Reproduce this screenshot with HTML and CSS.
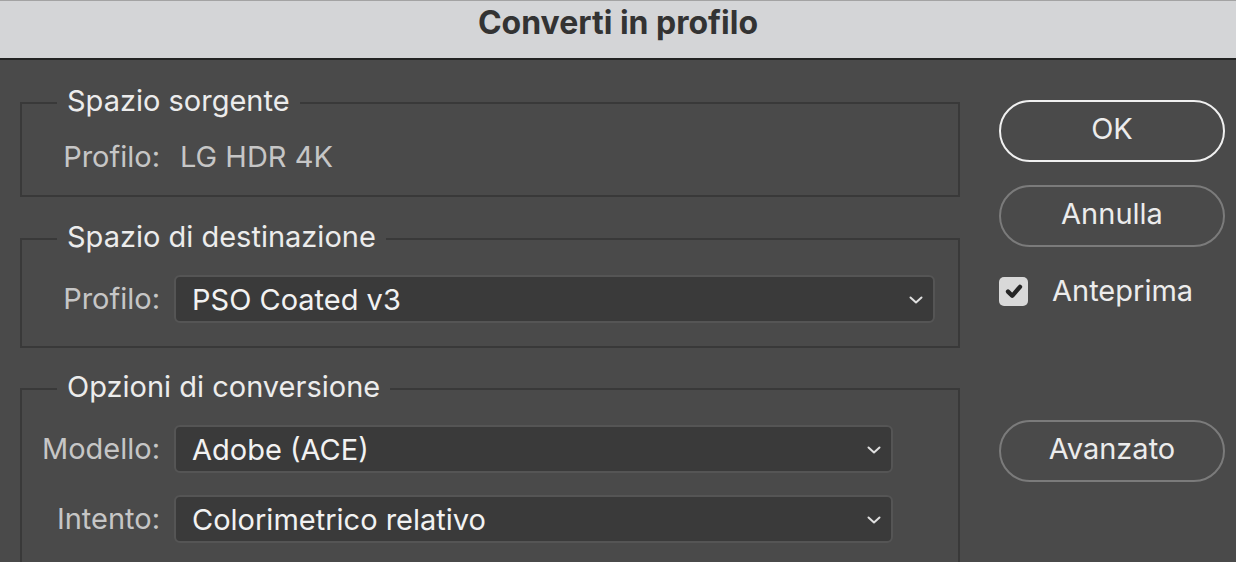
FILE: index.html
```html
<!DOCTYPE html>
<html lang="it">
<head>
  <meta charset="UTF-8" />
  <meta name="viewport" content="width=device-width, initial-scale=1.0"/>
  <title>Converti in profilo</title>
  <link rel="stylesheet" href="styles.css">
</head>
<body>
  <div class="titlebar">Converti in profilo</div>

  <div class="dialog">
    <div class="panels">
      <fieldset class="group group-source">
        <legend>Spazio sorgente</legend>
        <div class="row">
          <span class="label">Profilo:</span>
          <span class="value">LG HDR 4K</span>
        </div>
      </fieldset>

      <fieldset class="group group-dest">
        <legend>Spazio di destinazione</legend>
        <div class="row">
          <span class="label">Profilo:</span>
          <div class="select select-wide">
            <span>PSO Coated v3</span>
            <svg class="chevron" viewBox="0 0 14 8"><path d="M1.5 1.5 L7 6.5 L12.5 1.5"/></svg>
          </div>
        </div>
      </fieldset>

      <fieldset class="group group-options">
        <legend>Opzioni di conversione</legend>
        <div class="row">
          <span class="label">Modello:</span>
          <div class="select">
            <span>Adobe (ACE)</span>
            <svg class="chevron" viewBox="0 0 14 8"><path d="M1.5 1.5 L7 6.5 L12.5 1.5"/></svg>
          </div>
        </div>
        <div class="row">
          <span class="label">Intento:</span>
          <div class="select">
            <span>Colorimetrico relativo</span>
            <svg class="chevron" viewBox="0 0 14 8"><path d="M1.5 1.5 L7 6.5 L12.5 1.5"/></svg>
          </div>
        </div>
      </fieldset>
    </div>

    <div class="actions">
      <button class="btn btn-default">OK</button>
      <button class="btn">Annulla</button>
      <label class="check">
        <span class="box">
          <svg viewBox="0 0 20 20"><path d="M5 10.5 L8.5 14 L15 6.5"/></svg>
        </span>
        <span>Anteprima</span>
      </label>
      <button class="btn btn-advanced">Avanzato</button>
    </div>
  </div>
</body>
</html>
```

FILE: styles.css
```css
/* Page and title bar */
body {
  margin: 0;
  height: 100vh;
  overflow: hidden;
  background: #4a4a4a;
  font-family: Inter, "Noto Sans", sans-serif;
  font-size: 29px;
  color: #e6e6e6;
}

.titlebar {
  height: 57px;
  line-height: 44px;
  background: #d4d5d7;
  border-top: 1px solid #a3a3a3;
  border-bottom: 2px solid #232323;
  text-align: center;
  font-size: 32px;
  font-weight: bold;
  color: #333;
}

/* Dialog body */
.dialog {
  display: flex;
  padding: 0 11px 0 20px;
  gap: 39px;
}

.panels {
  width: 940px;
  padding-top: 28px;
}

.group {
  margin: 0 0 26px 0;
  padding: 21px 22px 23px 20px;
  border: 2px solid #393939;
}

.group legend {
  margin-left: 15px;
  padding: 0 10px 4px;
  line-height: 26px;
  color: #ececec;
}

.group-source {
  margin-bottom: 27px;
  padding-top: 24px;
  padding-bottom: 23px;
}

.group-options {
  margin-bottom: 0;
  height: 200px;
}

.row {
  display: flex;
  align-items: center;
  gap: 14px;
}

.row + .row {
  margin-top: 22px;
}

.label {
  width: 118px;
  text-align: right;
  color: #c6c6c6;
  line-height: 30px;
  white-space: nowrap;
}

.value {
  margin-left: 6px;
  color: #c6c6c6;
  line-height: 30px;
}

/* Dropdowns */
.select {
  width: 719px;
  height: 48px;
  box-sizing: border-box;
  display: flex;
  align-items: center;
  justify-content: space-between;
  padding: 0 10px 0 16px;
  background: #3a3a3a;
  border: 2px solid #555;
  border-radius: 6px;
  color: #f2f2f2;
}

.select-wide {
  width: 761px;
}

.chevron {
  width: 14px;
  height: 8px;
  margin-top: 2px;
}

.chevron path {
  fill: none;
  stroke: #e0e0e0;
  stroke-width: 2;
  stroke-linecap: round;
  stroke-linejoin: round;
}

/* Right-hand buttons */
.actions {
  width: 226px;
  display: flex;
  flex-direction: column;
  padding-top: 40px;
}

.btn {
  height: 62px;
  border: 2px solid #7b7b7b;
  border-radius: 31px;
  background: transparent;
  color: #ececec;
  font-family: inherit;
  font-size: 29px;
  padding: 0 0 5px;
}

.btn-default {
  border-color: #f0f0f0;
}

.btn + .btn {
  margin-top: 23px;
}

.btn-advanced {
  margin-top: 115px;
}

.check {
  display: flex;
  align-items: center;
  gap: 24px;
  height: 28px;
  line-height: 28px;
  margin-top: 30px;
  color: #ececec;
}

.box {
  width: 29px;
  height: 29px;
  background: #d9d9d9;
  border-radius: 5px;
  display: flex;
  align-items: center;
  justify-content: center;
}

.box svg {
  width: 24px;
  height: 24px;
}

.box path {
  fill: none;
  stroke: #262626;
  stroke-width: 3.6;
  stroke-linecap: round;
  stroke-linejoin: round;
}
```
